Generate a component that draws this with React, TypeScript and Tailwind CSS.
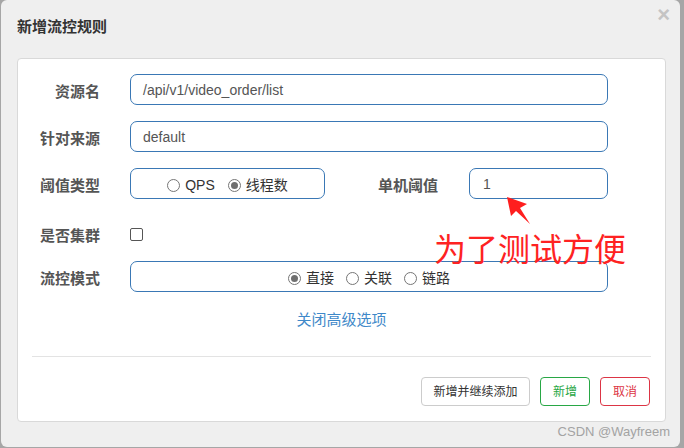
import React from 'react';

const font = { fontFamily: '"Liberation Sans", "Noto Sans CJK SC", sans-serif' };

function Radio({ checked, label }: { checked?: boolean; label: string }) {
  return (
    <span className="flex items-center">
      <span className="flex h-[13px] w-[13px] items-center justify-center rounded-full border border-[#767676] bg-white">
        {checked && <span className="h-[7px] w-[7px] rounded-full bg-[#6f6f6f]" />}
      </span>
      <span className="ml-[5px] text-[14px] text-[#333]">{label}</span>
    </span>
  );
}

function Label({ text, w = 'w-[82px]' }: { text: string; w?: string }) {
  return <div className={`${w} shrink-0 pt-[5px] text-right text-[15px] font-bold text-[#555]`}>{text}</div>;
}

export default function App() {
  return (
    <div className="relative flex h-[448px] w-[684px] bg-[#a6a6a6]" style={font}>
      {/* 弹窗 */}
      <div className="ml-[1px] flex h-[447px] w-[679px] flex-col rounded-[6px] bg-[#efefef]">
        <div className="flex h-[58px] shrink-0 items-start justify-between pl-[16px] pr-[10px]">
          <h4 className="pt-[17px] text-[15px] font-bold leading-[20px] text-[#333]">新增流控规则</h4>
          <span className="pt-[2px] text-[22px] font-bold leading-[26px] text-[#c4c4c4]">×</span>
        </div>

        <div className="ml-[16px] flex h-[364px] w-[649px] flex-col rounded-[4px] border border-[#d9d9d9] bg-white pt-[15px]">
          <div className="flex h-[31px] items-center">
            <Label text="资源名" />
            <div className="ml-[30px] flex h-[31px] w-[478px] items-center rounded-[7px] border border-[#3a78b5] pl-[12px] pt-[2px] text-[14px] text-[#555]">
              /api/v1/video_order/list
            </div>
          </div>

          <div className="mt-[16px] flex h-[31px] items-center">
            <Label text="针对来源" />
            <div className="ml-[30px] flex h-[31px] w-[478px] items-center rounded-[7px] border border-[#3a78b5] pl-[12px] pt-[2px] text-[14px] text-[#555]">
              default
            </div>
          </div>

          <div className="mt-[16px] flex h-[31px] items-center">
            <Label text="阈值类型" />
            <div className="ml-[30px] flex h-[31px] w-[195px] items-center justify-center gap-[13px] rounded-[7px] border border-[#3a78b5] pt-[4px]">
              <Radio label="QPS" />
              <Radio checked label="线程数" />
            </div>
            <Label text="单机阈值" w="w-[113px]" />
            <div className="ml-[31px] flex h-[31px] w-[139px] items-center rounded-[7px] border border-[#3a78b5] pl-[13px] pt-[2px] text-[14px] text-[#555]">
              1
            </div>
          </div>

          <div className="mt-[25px] flex h-[20px] items-center">
            <Label text="是否集群" />
            <span className="ml-[30px] h-[13px] w-[13px] rounded-[2px] border border-[#555] bg-white" />
          </div>

          <div className="mt-[17px] flex h-[31px] items-center">
            <Label text="流控模式" />
            <div className="ml-[30px] flex h-[31px] w-[478px] items-center justify-center gap-[12px] rounded-[7px] border border-[#3a78b5] pt-[4px]">
              <Radio checked label="直接" />
              <Radio label="关联" />
              <Radio label="链路" />
            </div>
          </div>

          <div className="mt-[18px] text-center text-[15px] leading-[20px] text-[#3f89c9]">关闭高级选项</div>

          <div className="mx-[14px] mt-[26px] border-t border-[#e3e3e3]" />

          <div className="mt-[20px] flex justify-end gap-[10px] pr-[15px]">
            <button className="h-[29px] w-[109px] rounded-[4px] border border-[#cccccc] bg-white text-[12px] text-[#333]">
              新增并继续添加
            </button>
            <button className="h-[29px] w-[50px] rounded-[4px] border border-[#28a745] bg-white text-[12px] text-[#28a745]">
              新增
            </button>
            <button className="h-[29px] w-[50px] rounded-[4px] border border-[#dc3545] bg-white text-[12px] text-[#dc3545]">
              取消
            </button>
          </div>
        </div>

        <div className="mt-[1px] pr-[10px] text-right text-[13px] leading-[18px] text-[#a3a3a3]">CSDN @Wayfreem</div>
      </div>

      {/* 标注 */}
      <svg className="absolute left-0 top-0" width="684" height="448" viewBox="0 0 684 448">
        <polygon points="507,197 527,204 520,208 530,224 516,211 511,216" fill="#fe1e1e" />
      </svg>
      <div className="absolute left-[434px] top-[229px] text-[32px] leading-[36px] text-[#fe2222]" style={{ fontFamily: '"Noto Sans CJK SC", sans-serif' }}>
        为了测试方便
      </div>
    </div>
  );
}
